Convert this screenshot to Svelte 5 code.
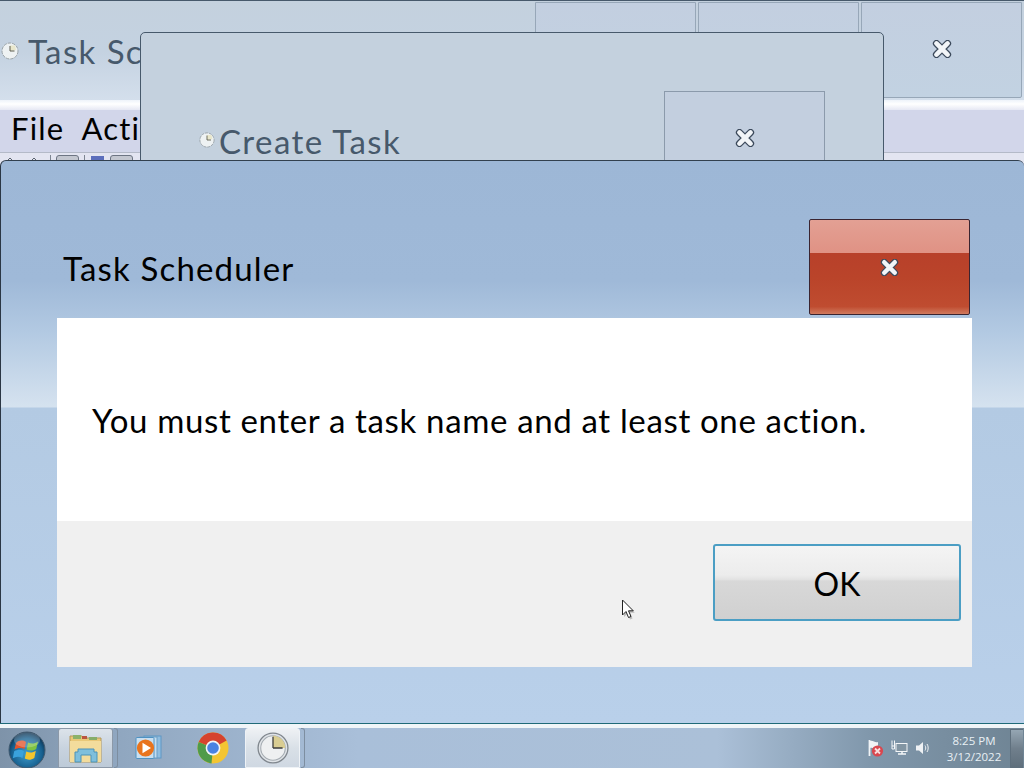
<script>
  const clockHands = "M15 15V4.5M15 15H24";
</script>

{#snippet closeX(w, h)}
  <svg class="x" width={w} height={h} viewBox="0 0 18 16" aria-hidden="true">
    <path d="M4 3 14 13M14 3 4 13" stroke="#3c4a5c" stroke-width="6.4" stroke-linecap="round" fill="none"/>
    <path d="M4 3 14 13M14 3 4 13" stroke="#f2f5f8" stroke-width="4.2" stroke-linecap="round" fill="none"/>
  </svg>
{/snippet}

{#snippet smallClock(size)}
  <svg width={size} height={size} viewBox="0 0 18 18" aria-hidden="true">
    <circle cx="9" cy="9" r="8" fill="#eef2f3" stroke="#9aa3a8" stroke-dasharray="3.4 1"/>
    <path d="M9 9V3.5H14L15 8Z" fill="#e8e5c4" opacity=".85"/>
    <path d="M9 9V4M9 9H13.5" stroke="#5d5d50" stroke-width="1" fill="none"/>
  </svg>
{/snippet}

<div class="desktop">
  <section class="window main-window">
    <header class="main-title">
      <div class="title-left">
        <span class="small-clock">{@render smallClock(18)}</span>
        <span class="faded-title">Task Scheduler</span>
      </div>
      <div class="caption-group">
        <div class="cap"></div>
        <div class="cap"></div>
        <div class="cap">{@render closeX(20, 18)}</div>
      </div>
    </header>
    <div class="white-strip"></div>
    <nav class="menu">
      <div class="menu-items"><span>File</span><span>Action</span></div>
    </nav>
    <div class="toolbar">
      <svg class="tool-arrows" width="46" height="8" viewBox="0 0 46 8" aria-hidden="true">
        <path d="M6 7 10 3 14 7M30 7 34 3 38 7" stroke="#59626e" fill="none"/>
      </svg>
      <i class="sep"></i>
      <i class="tool-btn"></i>
      <i class="sep sep2"></i>
      <i class="tool-blue"></i>
      <i class="tool-btn"></i>
    </div>
  </section>

  <section class="window create-window">
    <header class="create-title">
      <div class="create-left">
        <span class="small-clock-2">{@render smallClock(16)}</span>
        <span class="faded-title">Create Task</span>
      </div>
      <div class="cap create-cap">{@render closeX(20, 18)}</div>
    </header>
  </section>

  <section class="window dialog">
    <header class="dialog-title">
      <h1>Task Scheduler</h1>
      <div class="close-btn">{@render closeX(19, 17)}</div>
    </header>
    <div class="panel">
      <div class="message">You must enter a task name and at least one action.</div>
      <div class="footer">
        <button class="ok">OK</button>
      </div>
    </div>
  </section>

  <svg class="cursor" width="16" height="23" viewBox="0 0 16 23" aria-hidden="true">
    <path d="M3 3V18L6.5 14.5 9 20.5 11.5 19.5 9 13.8H13.8Z" fill="#888" opacity=".5"/>
    <path d="M1.5 1V16L5 12.5 7.5 18.5 10 17.5 7.5 11.8H12.3Z" fill="#fff" stroke="#222" stroke-width="1" stroke-linejoin="round"/>
  </svg>

  <footer class="taskbar">
    <div class="task-left">
      <svg class="orb" width="38" height="38" viewBox="0 0 38 38" aria-hidden="true">
        <defs>
          <radialGradient id="orbfill" cx="50%" cy="60%" r="60%">
            <stop offset="0" stop-color="#3f9fd0"/>
            <stop offset=".7" stop-color="#17608f"/>
            <stop offset="1" stop-color="#0c2c48"/>
          </radialGradient>
        </defs>
        <circle cx="19" cy="19" r="18" fill="url(#orbfill)" stroke="#41596e"/>
        <path d="M8 12C11 9 15 9 18 11L16.5 18C13.5 16.5 10 16.5 6.5 18.5Z" fill="#e2562d"/>
        <path d="M20 11.5C23 13 26.5 13 30 10.5L28.2 18C25 20 21.5 20 18.6 18.6Z" fill="#7ec342"/>
        <path d="M6.2 20.2C9.8 18.2 13 18.2 16 20L14.5 27C11.3 25.2 8 25.4 4.8 27.3Z" fill="#3aa2dc"/>
        <path d="M18.3 20.4C21.3 22 24.6 22 27.8 19.8L26.3 27C23 29.2 19.8 29.2 16.8 27.6Z" fill="#f4c52e"/>
        <ellipse cx="19" cy="9" rx="13" ry="7.5" fill="#fff" opacity=".22"/>
      </svg>

      <div class="task-btn active">
        <svg width="36" height="32" viewBox="0 0 36 32" aria-hidden="true">
          <path d="M2 4H14L16 6H33V30H2Z" fill="#e9c878" stroke="#b3975a"/>
          <rect x="5" y="3" width="8" height="4" fill="#8cb26a"/>
          <rect x="14" y="4" width="5" height="3" fill="#b9553f"/>
          <rect x="21" y="5" width="8" height="3" fill="#86ad6a"/>
          <path d="M2 9H33V30H2Z" fill="#f3dc9c"/>
          <path d="M7 30V20H10V17H26V20H29V30H23V23H13V30Z" fill="#7fbfdc" stroke="#4d93b8"/>
        </svg>
      </div>
      <i class="task-sep"></i>

      <div class="task-plain wmp">
        <svg width="28" height="28" viewBox="0 0 28 28" aria-hidden="true">
          <rect x="9" y="2" width="17" height="22" fill="#8fbde0" stroke="#5f97c4"/>
          <rect x="5" y="3" width="17" height="21" fill="#c4ddf0" stroke="#6c9ec4"/>
          <rect x="1" y="3.5" width="18" height="21" rx="1" fill="#c9dff0" stroke="#4f92c2"/>
          <circle cx="10.5" cy="14" r="8.6" fill="#e8741d"/>
          <path d="M7.5 8.8 16 14 7.5 19.2Z" fill="#fff"/>
        </svg>
      </div>

      <div class="task-plain chrome">
        <svg width="32" height="32" viewBox="0 0 32 32" aria-hidden="true">
          <circle cx="16" cy="16" r="15.5" fill="#f3c532"/>
          <path d="M16 16 1.7 10A15.5 15.5 0 0 1 29.6 8.5Z" fill="#d6432f"/>
          <path d="M16 16 1.7 10A15.5 15.5 0 0 0 14.5 31.4Z" fill="#4f9b4a"/>
          <circle cx="16" cy="16" r="7.4" fill="#f3f5f7"/>
          <circle cx="16" cy="16" r="5.8" fill="#4a82e2"/>
        </svg>
      </div>

      <div class="task-btn active clock-btn">
        <svg width="32" height="32" viewBox="0 0 30 30" aria-hidden="true">
          <circle cx="15" cy="15" r="14" fill="#dfe3e7" stroke="#7f868d" stroke-width="1.2"/>
          <circle cx="15" cy="15" r="11.5" fill="#eef0f1" stroke="#a5acb2"/>
          <path d="M15 15V3.5A11.5 11.5 0 0 1 26.5 15Z" fill="#d9cd92"/>
          <path d={clockHands} stroke="#3c3c3c" stroke-width="1.2" fill="none"/>
        </svg>
      </div>
      <i class="task-sep"></i>
    </div>

    <div class="tray">
      <div class="tray-icons">
        <svg width="18" height="18" viewBox="0 0 18 18" aria-hidden="true">
          <path d="M3.5 1V17" stroke="#f0f3f6" stroke-width="1.8"/>
          <path d="M4 2C7 1 9 4 12 3V10C9 11 7 8 4 9Z" fill="#f0f3f6"/>
          <circle cx="11.5" cy="12" r="5.6" fill="#d9474f"/>
          <path d="M9 9.5 14 14.5M14 9.5 9 14.5" stroke="#f8dede" stroke-width="1.8"/>
        </svg>
        <svg width="17" height="16" viewBox="0 0 17 16" aria-hidden="true">
          <path d="M1 0.5V6M3.5 0.5V6M1 6H3.5V9H1Z" stroke="#f4f6f8" fill="none"/>
          <rect x="5" y="3.5" width="11" height="8" fill="#8295a3" stroke="#f4f6f8"/>
          <path d="M7 14H15M11 11.5V14" stroke="#f4f6f8" stroke-width="1.5"/>
        </svg>
        <svg width="16" height="16" viewBox="0 0 16 16" aria-hidden="true">
          <path d="M1 5.5H4L8 2V14L4 10.5H1Z" fill="#eef1f4"/>
          <path d="M10 5.5C11 7 11 9 10 10.5M12 4C13.6 6 13.6 10 12 12" stroke="#eef1f4" fill="none"/>
        </svg>
      </div>
      <div class="time">
        <span>8:25 PM</span>
        <span>3/12/2022</span>
      </div>
      <div class="show-desktop"></div>
    </div>
  </footer>
</div>

<style>
  :global(body) { margin: 0; background: #b9d0ea; }
  .desktop {
    position: relative;
    width: 1024px;
    height: 768px;
    overflow: hidden;
    font-family: "Lato", "Open Sans", sans-serif;
  }
  .window { position: absolute; box-sizing: border-box; }

  /* main window */
  .main-window {
    left: 0; top: 0; width: 1024px; height: 170px;
    border-top: 1px solid #47596b;
    background: linear-gradient(#c4d1de, #c4d2e1 30%, #d4dfec 100px);
  }
  .main-title {
    display: flex;
    justify-content: space-between;
    height: 99px;
    box-sizing: border-box;
  }
  .title-left {
    display: flex;
    align-items: center;
    width: 140px;
    height: 99px;
    overflow: hidden;
    flex: none;
  }
  .small-clock { margin: 0 9px 0 1px; display: flex; flex: none; }
  .faded-title {
    font-size: 33px;
    color: #47596b;
    letter-spacing: 1.4px;
    white-space: nowrap;
  }
  .caption-group { display: flex; gap: 2px; padding: 1px 2px 0 0; }
  .cap {
    width: 161px;
    height: 96px;
    padding-bottom: 2px;
    box-sizing: border-box;
    border: 1px solid #97a7b8;
    border-radius: 0 0 2px 2px;
    background: linear-gradient(#c3cfe0, #c2d2e2);
    display: flex;
    align-items: center;
    justify-content: center;
  }
  .white-strip { height: 10px; background: linear-gradient(#eef3fa, #fff 40%, #e6e8f4); }
  .menu {
    height: 43px;
    padding-left: 11px;
    padding-bottom: 6px;
    box-sizing: border-box;
    display: flex;
    align-items: center;
    background: #d2d6ea;
    font-size: 31px;
    color: #000;
    border-bottom: 1px solid #b4bac8;
  }
  .menu-items {
    display: flex;
    gap: 17px;
    width: 129px;
    overflow: hidden;
    letter-spacing: 1.2px;
    white-space: nowrap;
  }
  .toolbar {
    display: flex;
    align-items: flex-start;
    height: 17px;
    background: #e3e5f1;
    padding-top: 2px;
    box-sizing: border-box;
  }
  .tool-arrows { margin: 0; }
  .sep { width: 1px; height: 8px; background: #7d8591; margin: 0 5px 0 4px; }
  .sep2 { margin: 0 6px 0 5px; }
  .tool-btn {
    width: 23px; height: 14px; border-radius: 3px;
    background: #c3c7d0; border: 1px solid #6d7583;
    box-sizing: border-box;
  }
  .tool-blue { width: 13px; height: 10px; background: #5c6fbc; margin: 1px 6px 0 0; }

  /* create task */
  .create-window {
    left: 140px; top: 32px; width: 744px; height: 135px;
    border: 1px solid #47596b;
    border-radius: 5px 5px 0 0;
    background: #c4d1de;
  }
  .create-title {
    display: flex;
    justify-content: space-between;
    padding-right: 58px;
  }
  .create-left { display: flex; align-items: flex-end; height: 126px; padding-left: 58px; }
  .small-clock-2 { display: flex; margin: 0 4px 11px 0; }
  .create-left .faded-title { line-height: 40px; margin-bottom: -2px; }
  .create-cap {
    margin-top: 58px;
    border-radius: 0;
    height: 100px;
    padding-bottom: 7px;
    background: #c3cfdf;
    border-color: #8b9aab;
  }

  /* dialog */
  .dialog {
    left: 0; top: 160px; width: 1024px; height: 563px;
    border-top: 1px solid #32404e;
    border-left: 1px solid #2a3644;
    border-radius: 6px 6px 0 0;
    padding: 0 52px 0 56px;
    display: flex;
    flex-direction: column;
    background:
      linear-gradient(#9db7d6, #9fb9d8 120px, #b2c9e2 170px, #d5e2ef 246px, #b3cae3 247px, #b9d0ea 100%);
  }
  .dialog-title {
    display: flex;
    justify-content: space-between;
    align-items: flex-start;
    height: 157px;
    padding: 58px 2px 0 6px;
    box-sizing: border-box;
  }
  h1 {
    margin: 29px 0 0;
    font-size: 33px;
    font-weight: 400;
    line-height: 40px;
    color: #000;
    letter-spacing: 1.17px;
  }
  .close-btn {
    width: 161px;
    height: 96px;
    box-sizing: border-box;
    border: 1px solid #3a2430;
    border-radius: 2px;
    display: flex;
    align-items: center;
    justify-content: center;
    background: linear-gradient(#e3a094, #e09284 35%, #b8402a 35%, #ba442a 62%, #bf4c30 92%, #d07a5e 100%);
  }
  .panel {
    flex: none;
    height: 349px;
    display: flex;
    flex-direction: column;
  }
  .message {
    flex: none;
    height: 203px;
    background: #fff;
    padding: 0 35px;
    display: flex;
    align-items: center;
    box-sizing: border-box;
    font-size: 33px;
    letter-spacing: .65px;
    color: #000;
    white-space: nowrap;
  }
  .footer {
    flex: 1;
    background: #f0f0f0;
    display: flex;
    justify-content: flex-end;
    align-items: flex-start;
    padding: 23px 11px 0 0;
  }
  .ok {
    width: 248px;
    height: 77px;
    border: 2px solid #4b9ec4;
    border-radius: 3px;
    background: linear-gradient(#f4f4f4, #ececec 40%, #e2e2e2 46%, #d8d8d8 48%, #d0d0d0 100%);
    font-family: inherit;
    font-size: 32px;
    color: #000;
    padding: 2px 0 0;
  }

  .cursor { position: absolute; left: 621px; top: 599px; }

  /* taskbar */
  .taskbar {
    position: absolute;
    left: 0; right: 0; top: 723px; height: 45px;
    box-sizing: border-box;
    border-top: 1px solid #1f6a78;
    display: flex;
    justify-content: space-between;
    background:
      linear-gradient(#f0f5f8 0, #f0f5f8 4px, transparent 4px),
      linear-gradient(90deg, #7e93a9, #8ea5be 10%, #a9bfd9 35%, #abc0d8 70%, #8097ab 85%, #6f8494 100%);
    padding-top: 4px;
  }
  .task-left { display: flex; align-items: flex-start; }
  .orb { margin: 3px 12px 0 8px; flex: none; }
  .task-btn {
    width: 55px;
    height: 40px;
    box-sizing: border-box;
    border: 1px solid #8c99a8;
    border-radius: 3px 3px 0 0;
    background: linear-gradient(#dce3ea, #c8d3df 50%, #bdcad8);
    display: flex;
    align-items: center;
    justify-content: center;
  }
  .task-btn.clock-btn { background: linear-gradient(#eef1f4, #d9e0e7 50%, #cfd8e2); border-color: #eef2f6; }
  .task-sep {
    width: 4px; height: 40px; margin-left: 1px; box-sizing: border-box;
    border: 1px solid #7d8ea0; border-left: 0; border-radius: 0 3px 3px 0;
  }
  .task-plain { height: 40px; display: flex; align-items: center; justify-content: center; }
  .wmp { width: 60px; margin-left: 1px; }
  .chrome { width: 66px; padding-left: 2px; box-sizing: border-box; }
  .tray { display: flex; align-items: flex-start; }
  .tray-icons {
    display: flex;
    gap: 7px;
    align-items: center;
    height: 40px;
    margin-right: 11px;
  }
  .time {
    display: flex;
    flex-direction: column;
    align-items: center;
    width: 64px;
    color: #e9f0f5;
    font-family: "Open Sans", sans-serif;
    font-size: 11.5px;
    line-height: 16px;
    padding-top: 5px;
    margin-right: 4px;
  }
  .show-desktop {
    width: 13px;
    height: 39px;
    margin-top: 1px;
    border: 1px solid #5e6f7d;
    border-right: 0;
    box-sizing: border-box;
    background: linear-gradient(#95a6b3, #707f8c 50%, #5f6f7c);
    margin-right: 1px;
  }
</style>
